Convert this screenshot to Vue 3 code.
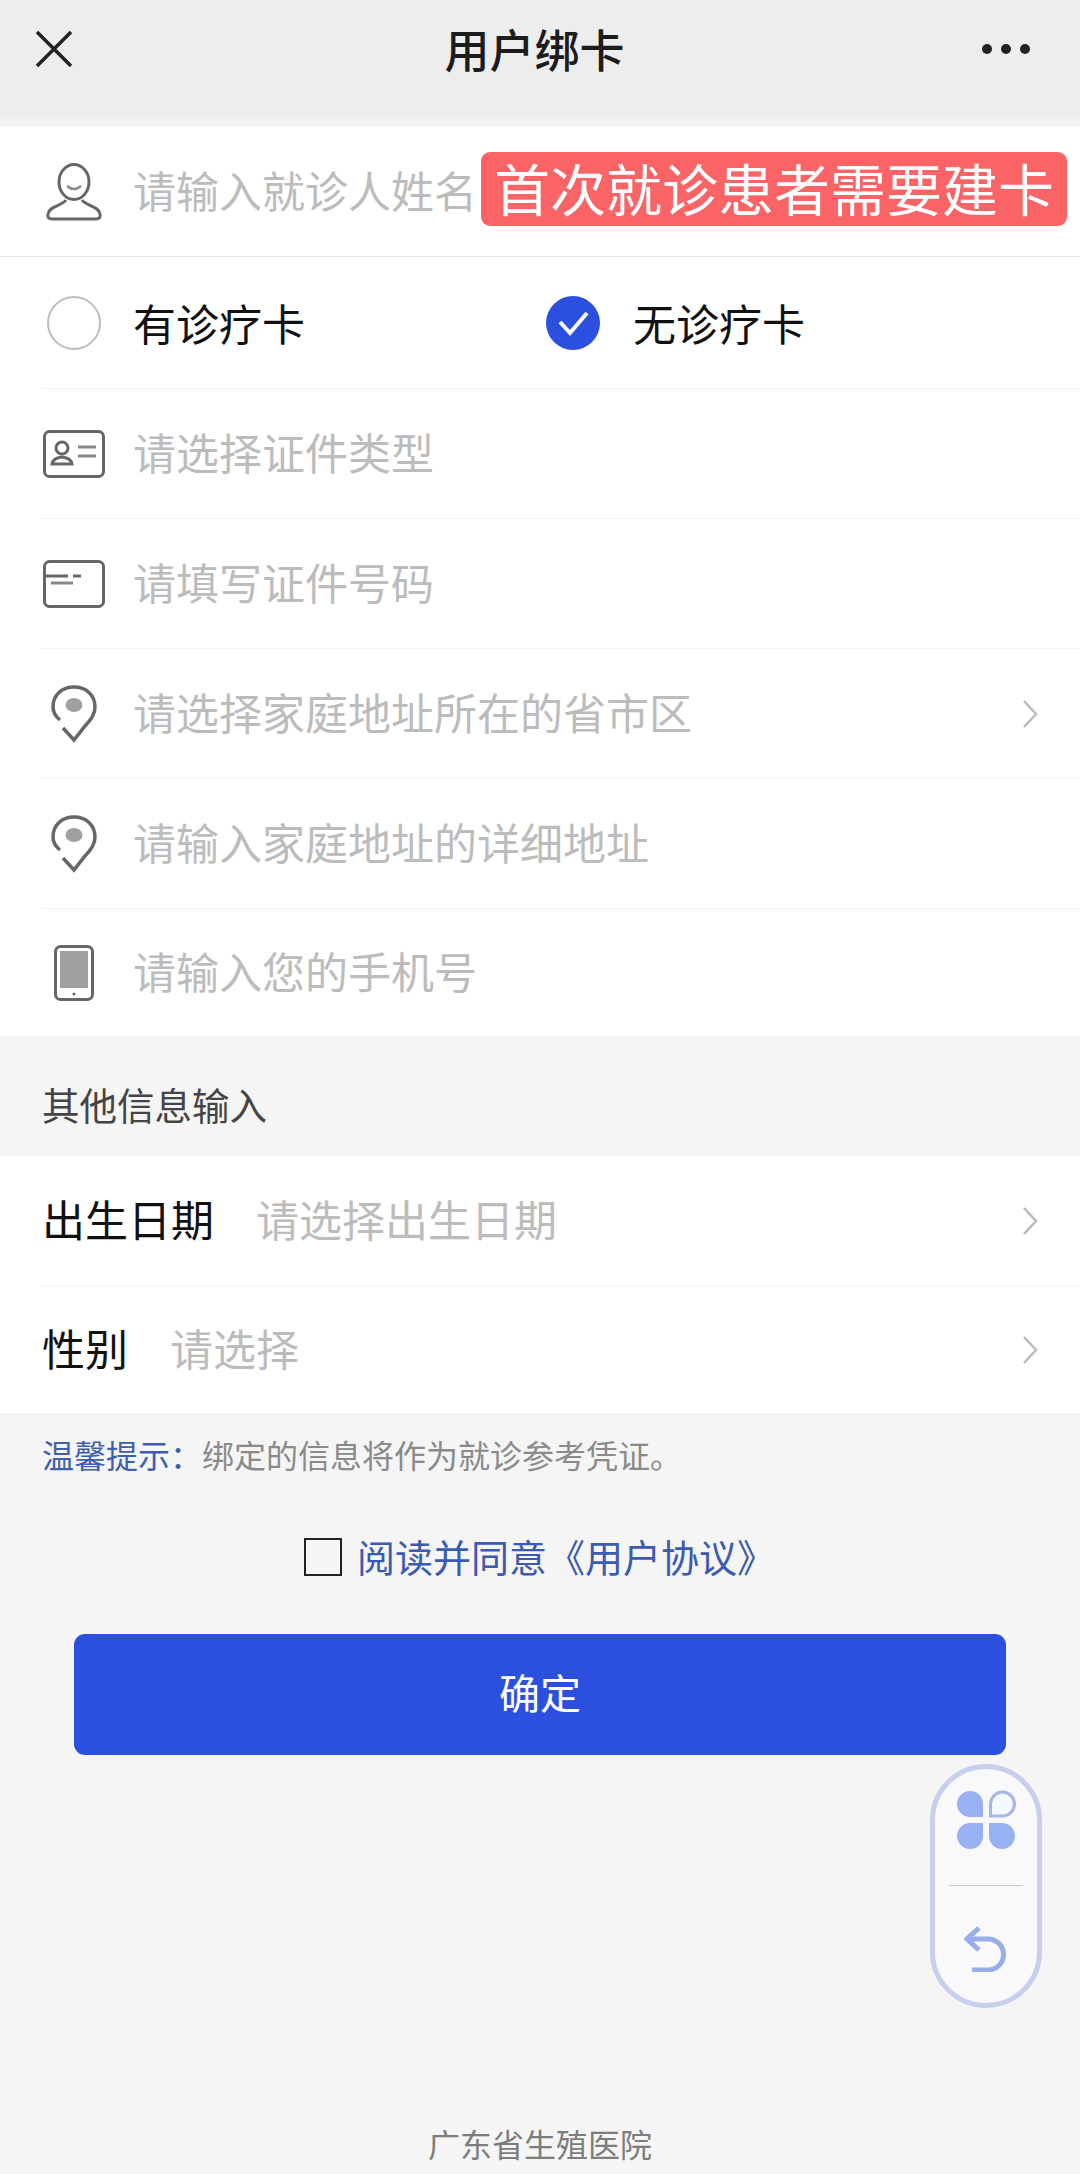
<template>
  <div class="page">
    <header class="nav">
      <svg class="nav-close" viewBox="0 0 38 38">
        <path d="M2 2 L36 36 M36 2 L2 36" />
      </svg>
      <span class="nav-title">用户绑卡</span>
      <div class="nav-more"><i></i><i></i><i></i></div>
    </header>
    <div class="nav-fade"></div>

    <div class="name-row">
      <span class="icon-cell">
        <svg width="56" height="58" viewBox="0 0 56 58" fill="none" stroke="#666" stroke-width="3">
          <ellipse cx="28" cy="19" rx="15" ry="17.500" />
          <path d="M21 23 q7 6 14 0" stroke="#888" stroke-width="2.500" />
          <path d="M20 37 C16 43 3 43 2 51 Q1 56 6 56 H50 Q55 56 54 51 C53 43 40 43 36 37" />
        </svg>
      </span>
      <span class="placeholder">请输入就诊人姓名</span>
      <span class="tag">首次就诊患者需要建卡</span>
    </div>

    <section class="form">
      <div class="row radios">
        <div class="radio radio-off">
          <span class="icon-cell"><i class="circle"></i></span>
          <span class="label">有诊疗卡</span>
        </div>
        <div class="radio">
          <svg class="tick" width="54" height="54" viewBox="0 0 54 54">
            <circle cx="27" cy="27" r="27" fill="#2b50e0" />
            <path d="M14 26 L24 37 L41 17" fill="none" stroke="#fff" stroke-width="4" />
          </svg>
          <span class="label">无诊疗卡</span>
        </div>
      </div>

      <div class="row" v-for="item in fields" :key="item.text">
        <span class="icon-cell">
          <svg v-if="item.icon === 'id'" width="62" height="48" viewBox="0 0 62 48" fill="none" stroke="#666" stroke-width="3">
            <rect x="1.500" y="1.500" width="59" height="45" rx="5" />
            <circle cx="19" cy="18" r="6" />
            <path d="M9 34 q1 -6 10 -7 q9 1 10 7 z" />
            <path d="M35 17 H53 M35 26 H53" stroke="#888" />
          </svg>
          <svg v-else-if="item.icon === 'card'" width="62" height="48" viewBox="0 0 62 48" fill="none" stroke="#666" stroke-width="3">
            <rect x="1.500" y="1.500" width="59" height="45" rx="5" />
            <path d="M2 16 H25 M30 16 H38" />
            <path d="M8 23 H30" stroke="#888" />
          </svg>
          <svg v-else-if="item.icon === 'pin'" width="46" height="58" viewBox="0 0 46 58" fill="none" stroke="#666" stroke-width="3.500">
            <path d="M9 35 C4 31 2 27 2 22 C2 10 11 2 23 2 C35 2 44 10 44 22 C44 30 39 36 34 41 L23 55 L12 43" />
            <ellipse cx="23" cy="20" rx="8.500" ry="7" fill="#a0a0a0" stroke="none" />
          </svg>
          <svg v-else width="40" height="56" viewBox="0 0 40 56" fill="none" stroke="#666" stroke-width="3">
            <rect x="1.500" y="1.500" width="37" height="53" rx="5" />
            <rect x="6" y="6" width="28" height="37" fill="#a0a0a0" stroke="none" />
            <circle cx="20" cy="49" r="1.500" fill="#666" stroke="none" />
          </svg>
        </span>
        <span class="placeholder">{{ item.text }}</span>
        <svg v-if="item.arrow" class="chevron" viewBox="0 0 16 30">
          <path d="M2 2 L14 15 L2 28" />
        </svg>
      </div>
    </section>

    <h3 class="section-title">其他信息输入</h3>

    <section class="form">
      <div class="row" v-for="item in extras" :key="item.label">
        <span class="label extra-label">{{ item.label }}</span>
        <span class="placeholder">{{ item.text }}</span>
        <svg class="chevron" viewBox="0 0 16 30">
          <path d="M2 2 L14 15 L2 28" />
        </svg>
      </div>
    </section>

    <p class="tip"><span class="tip-key">温馨提示：</span>绑定的信息将作为就诊参考凭证。</p>

    <div class="agree">
      <i class="checkbox"></i>
      <span>阅读并同意《用户协议》</span>
    </div>

    <button class="confirm">确定</button>

    <footer class="foot">广东省生殖医院</footer>

    <!-- 悬浮按钮 -->
    <div class="float-pill">
      <svg width="60" height="60" viewBox="0 0 60 60">
        <path d="M27 27 H13 A13 13 0 1 1 27 13 Z" fill="#98b1f2" />
        <path d="M34.500 26 V13 A12 12 0 1 1 47 26 Z" fill="#f4f8ff" stroke="#a5b6ea" stroke-width="3" />
        <path d="M27 33 H13 A13 13 0 1 0 27 47 Z" fill="#98b1f2" />
        <path d="M33 33 H47 A13 13 0 1 1 33 47 Z" fill="#98b1f2" />
      </svg>
      <i class="float-line"></i>
      <svg width="44" height="46" viewBox="0 0 44 46" fill="none" stroke="#98aeea" stroke-width="5">
        <path d="M15 2 L3 13 L15 24" />
        <path d="M3 13 H24 A15.500 15.500 0 0 1 24 44 H8" />
      </svg>
    </div>
  </div>
</template>

<script setup>
const fields = [
  { icon: 'id', text: '请选择证件类型' },
  { icon: 'card', text: '请填写证件号码' },
  { icon: 'pin', text: '请选择家庭地址所在的省市区', arrow: true },
  { icon: 'pin', text: '请输入家庭地址的详细地址' },
  { icon: 'phone', text: '请输入您的手机号' }
]

const extras = [
  { label: '出生日期', text: '请选择出生日期' },
  { label: '性别', text: '请选择' }
]
</script>

<style>
html,
body {
  margin: 0;
  background: #f5f5f5;
}
</style>

<style scoped>
.page {
  position: relative;
  height: 2174px;
  display: flex;
  flex-direction: column;
  overflow: hidden;
  background: #f5f5f5;
  font-family: "Noto Sans CJK SC", "Liberation Sans", sans-serif;
}

.nav {
  height: 113px;
  flex: none;
  display: flex;
  align-items: center;
  justify-content: space-between;
  padding: 0 50px 16px 35px;
  box-sizing: border-box;
  background: #ededed;
}

.nav-close {
  width: 38px;
  height: 38px;
  fill: none;
  stroke: #222;
  stroke-width: 3.500;
}

.nav-title {
  font-size: 45px;
  font-weight: 500;
  color: #1c1c1c;
  margin-left: 14px;
}

.nav-more {
  display: flex;
  gap: 9px;
}

.nav-more i {
  width: 10px;
  height: 10px;
  border-radius: 50%;
  background: #222;
}

.nav-fade {
  height: 14px;
  flex: none;
  background: linear-gradient(#ececec, #f6f6f6);
}

.name-row {
  height: 130px;
  flex: none;
  position: relative;
  display: flex;
  align-items: center;
  padding-left: 42px;
  box-sizing: border-box;
  background: #fff;
  border-bottom: 1px solid #e4e4e4;
}

.icon-cell {
  width: 63px;
  margin-right: 28px;
  flex: none;
  display: flex;
  justify-content: center;
  align-items: center;
}

.placeholder {
  font-size: 43px;
  color: #bcbcbc;
  white-space: nowrap;
  margin-bottom: 6px;
}

.tag {
  position: absolute;
  left: 481px;
  top: 25px;
  width: 586px;
  height: 74px;
  border-radius: 9px;
  background: #fb6466;
  color: #fff;
  font-size: 56px;
  line-height: 70px;
  text-align: center;
  white-space: nowrap;
}

.form {
  flex: none;
  background: #fff;
}

.row {
  height: 130px;
  display: flex;
  align-items: center;
  margin-left: 42px;
  box-sizing: border-box;
  border-bottom: 1px solid #f1f1f1;
}

.row.radios {
  height: 132px;
}

.row:last-child {
  border-bottom: none;
  height: 127px;
}

.radio {
  display: flex;
  align-items: center;
}

.radio-off {
  width: 504px;
}

.circle {
  width: 50px;
  height: 50px;
  border: 2px solid #bdbdbd;
  border-radius: 50%;
}

.tick {
  margin-right: 33px;
}

.label {
  font-size: 43px;
  color: #111;
  margin-bottom: 2px;
}

.extra-label {
  margin-right: 42px;
  margin-bottom: 6px;
}

.chevron {
  width: 16px;
  height: 30px;
  margin-left: auto;
  margin-right: 42px;
  fill: none;
  stroke: #bbb;
  stroke-width: 2.500;
}

.section-title {
  height: 120px;
  flex: none;
  margin: 0;
  padding: 8px 0 0 42px;
  box-sizing: border-box;
  font-size: 37.500px;
  font-weight: 400;
  line-height: 120px;
  color: #444;
}

.tip {
  margin: 18px 0 0 42px;
  font-size: 32px;
  line-height: 46px;
  color: #8a8a8a;
}

.tip-key {
  color: #3d5fae;
}

.agree {
  margin-top: 54px;
  display: flex;
  justify-content: center;
  align-items: center;
  gap: 15px;
  font-size: 38px;
  line-height: 50px;
  color: #3a5bb0;
  padding-right: 1px;
}

.checkbox {
  width: 34px;
  height: 34px;
  border: 2px solid #222;
  margin-top: 2px;
}

.confirm {
  display: block;
  width: 932px;
  height: 121px;
  margin: 53px 0 0 74px;
  padding-bottom: 8px;
  flex: none;
  border: none;
  border-radius: 11px;
  background: #2b50e0;
  color: #fff;
  font-family: inherit;
  font-size: 41px;
}

.foot {
  margin-top: auto;
  padding-bottom: 9px;
  font-size: 32px;
  line-height: 44px;
  text-align: center;
  color: #7d7d7d;
}

.float-pill {
  position: absolute;
  left: 930px;
  top: 1764px;
  width: 112px;
  height: 244px;
  box-sizing: border-box;
  border: 5px solid #c6cfec;
  border-radius: 56px;
  background: #f9f9fb;
  display: flex;
  flex-direction: column;
  align-items: center;
  padding-top: 21px;
}

.float-line {
  width: 74px;
  height: 1px;
  margin: 35px 0 40px;
  background: #c9c9c9;
}
</style>
